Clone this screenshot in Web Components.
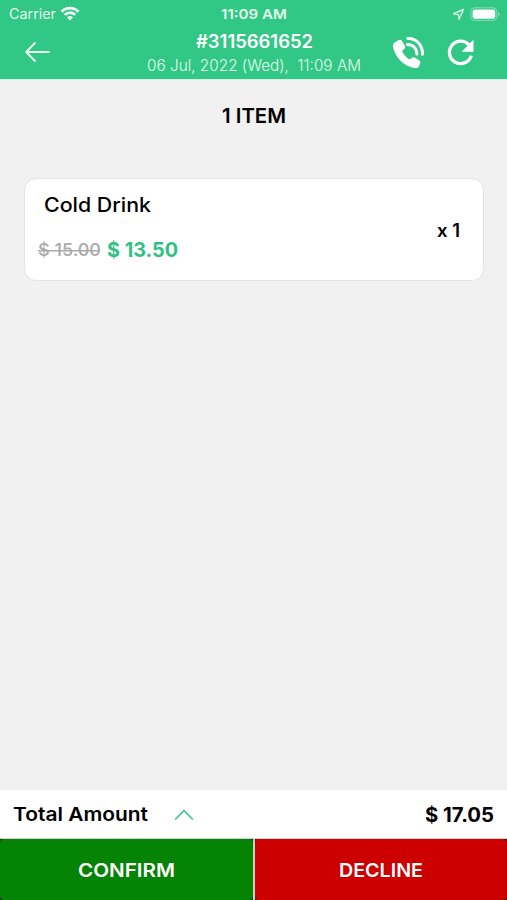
<!DOCTYPE html>
<html lang="en">
<head>
<meta charset="utf-8">
<meta name="viewport" content="width=device-width, initial-scale=1">
<title>Order #3115661652</title>
<style>
html, body { margin: 0; height: 100%; }
body { font-family: Inter, "Liberation Sans", sans-serif; color: #000; background: #f1f1f1; overflow: hidden; }
</style>
</head>
<body>
<order-screen></order-screen>
<script>
const define = (name, html, setup) => customElements.define(name, class extends HTMLElement {
  constructor() {
    super();
    this.attachShadow({ mode: 'open' }).innerHTML = html;
  }
  connectedCallback() { if (setup) setup(this); }
});

// One line of text widened or narrowed to occupy the width given by its attribute.
define('tracked-text', `<style>
:host { display: block; flex: none; white-space: nowrap; font-size: var(--size); line-height: var(--line, 24px); font-kerning: normal; }
span { display: inline-block; white-space: pre; transform-origin: 0 50%; vertical-align: top; }
</style><span></span>`, el => {
  const span = el.shadowRoot.querySelector('span');
  const width = Number(el.getAttribute('width'));
  span.textContent = el.getAttribute('text');
  el.style.width = width + 'px';
  const natural = span.getBoundingClientRect().width;
  span.style.transform = `scaleX(${(width + 1) / natural})`;
});

define('status-bar', `<style>
:host { display: grid; grid-template-columns: 1fr auto 1fr; align-items: center; height: 28px; padding: 0 6px 0 9px; color: #e4fbef; }
.left, .right { display: flex; align-items: center; }
.left { gap: 5px; }
.right { justify-content: flex-end; gap: 5px; }
.carrier { --size: 14px; }
.time { --size: 13.7px; font-weight: 600; margin-right: 3px; }
svg { display: block; }
</style>
<div class="left"><tracked-text class="carrier" width="46" text="Carrier"></tracked-text>
<svg width="20" height="16" viewBox="0 0 20 16" fill="none" stroke="#f4fff9" stroke-width="2.7"><path d="M1.500 5.700a12 12 0 0 1 17 0M4.700 8.900a7.500 7.500 0 0 1 10.600 0"/><path d="M10 14.600 7 11.500a4.300 4.300 0 0 1 6 0z" fill="#f4fff9" stroke="none"/></svg></div>
<tracked-text class="time" width="65" text="11:09 AM"></tracked-text>
<div class="right">
<svg width="13" height="13" viewBox="0 0 13 13" fill="none" stroke="#d6f8e6" stroke-width="1.4" stroke-linejoin="round"><path d="M11.500 1.500 1.500 5.700l5 .9.500 4.700z"/></svg>
<svg width="31" height="15" viewBox="0 0 31 15"><rect x=".8" y=".8" width="26" height="12.600" rx="3.800" fill="none" stroke="#85dfb2"/><rect x="2.600" y="2.500" width="22.600" height="9.200" rx="2.200" fill="#fff"/><path d="M28.200 4.700c2 .9 2 3.800 0 4.700z" fill="#85dfb2"/></svg>
</div>`);

define('order-header', `<style>
:host { display: block; height: 80px; background: #31c784; color: #fff; border-bottom: 1px solid #d5f0e2; box-sizing: border-box; flex: none; }
nav { display: grid; grid-template-columns: 1fr auto 1fr; height: 51px; }
.back { padding: 13px 0 0 24px; }
.mid { display: flex; flex-direction: column; align-items: center; padding-top: 2px; }
.id { --size: 18px; font-weight: 600; --line: 23px; }
.date { --size: 15.6px; font-weight: 300; color: #e4fbef; --line: 25px; }
.actions { display: flex; justify-content: flex-end; gap: 22px; padding: 8px 32px 0 0; }
svg { display: block; }
</style>
<status-bar></status-bar>
<nav>
<div class="back"><svg width="27" height="22" viewBox="0 0 27 22" fill="none" stroke="#e9fff4" stroke-width="1.9" stroke-linecap="round" stroke-linejoin="round"><path d="M25.200 11H2.200M11 2 2.200 11l8.800 9"/></svg></div>
<div class="mid"><tracked-text class="id" width="116" text="#3115661652"></tracked-text><tracked-text class="date" width="213" text="06 Jul, 2022 (Wed),  11:09 AM"></tracked-text></div>
<div class="actions">
<svg width="33" height="33" viewBox="-0.500 -0.500 32.500 33"><path fill="#fff" d="M3 5.200 6.100 3.600C7.400 3 8.600 3.500 9.200 4.500l2.900 4.700c.7 1.200.4 2.500-.6 3.300L9.200 14.600c1.300 3.200 4 6.200 7.500 8.500l2.100-1.700c1-.8 2.200-.9 3.300-.2l4.400 2.700c1.200.8 1.400 2 .9 3.200l-1.200 2.600c-.7 1.500-2.200 2.100-3.800 1.900C12.100 30.500 1.300 20.200.2 9.200 0 7.500 1.300 6 3 5.200z"/><path d="M15 2C23.500 1.500 30 8.500 29.800 17.800M14.600 7.900c5.600 0 9.400 3.900 9.500 9.700" fill="none" stroke="#fff" stroke-width="3" stroke-linecap="round"/></svg>
<svg width="28" height="32" viewBox="0 0 28 32"><path d="M22.200 9.200A11.200 11.200 0 1 0 24.300 19.800" fill="none" stroke="#fff" stroke-width="3.300"/><path d="M26.500 3.800v11.900H14.600z" fill="#fff"/></svg>
</div>
</nav>`);

define('order-item', `<style>
:host { display: flex; align-items: center; justify-content: space-between; box-sizing: border-box; height: 103px; margin: 0 23px 0 24px; padding: 2px 24px 0 13px; background: #fff; border: 1.5px solid #e3e3e3; border-radius: 12px; }
.info { align-self: stretch; padding-top: 12px; }
.name { --size: 20px; font-weight: 500; margin-left: 6px; }
.prices { display: flex; align-items: center; gap: 7px; margin-top: 21px; }
.old { --size: 17.5px; font-weight: 500; color: #aaa; background: linear-gradient(#aaa, #aaa) 0 12px / 100% 1.5px no-repeat; }
.new { --size: 20px; font-weight: 700; color: #31c184; }
.qty { --size: 18px; font-weight: 600; }
</style>
<div class="info"><tracked-text class="name" width="106" text="Cold Drink"></tracked-text>
<div class="prices"><tracked-text class="old" width="62" text="$ 15.00"></tracked-text><tracked-text class="new" width="70" text="$ 13.50"></tracked-text></div></div>
<tracked-text class="qty" width="22" text="x 1"></tracked-text>`);

define('total-bar', `<style>
:host { display: flex; align-items: center; height: 48px; padding: 1px 14px 0 13px; box-sizing: border-box; background: #fff; flex: none; }
.label { --size: 19px; font-weight: 600; }
.sum { --size: 19.5px; font-weight: 700; margin-left: auto; }
svg { display: block; margin-left: 27px; }
</style>
<tracked-text class="label" width="134" text="Total Amount"></tracked-text>
<svg width="20" height="14" viewBox="0 0 20 14" fill="none" stroke="#3fc48d" stroke-width="1.7" stroke-linecap="round" stroke-linejoin="round"><path d="M1.700 11 10 2.500l8.300 8.500"/></svg>
<tracked-text class="sum" width="68" text="$ 17.05"></tracked-text>`);

define('action-button', `<style>
:host { display: grid; background: #22252a; }
button { display: grid; place-items: center; font: inherit; font-weight: 600; border: 0; padding: 0; margin: 0; color: #fff; background: var(--fill); border-radius: 4px; }
</style><button><slot></slot></button>`);

define('order-screen', `<style>
:host { display: flex; flex-direction: column; height: 900px; background: #f1f1f1; }
main { flex: 1; }
.count { --size: 20.5px; font-weight: 600; margin: 24px auto 50px; }
.actions { display: grid; grid-template-columns: 253px 1fr; gap: 2px; height: 62px; background: #c9d2c9; border-top: 1px solid #cfd6cf; box-sizing: border-box; }
.confirm { --fill: #048304; }
.decline { --fill: #cd0000; }
.actions tracked-text { --size: 19.3px; margin-right: 2px; text-align: left; }
</style>
<order-header></order-header>
<main><tracked-text class="count" width="63" text="1 ITEM"></tracked-text><order-item></order-item></main>
<total-bar></total-bar>
<div class="actions">
<action-button class="confirm"><tracked-text width="96" text="CONFIRM"></tracked-text></action-button>
<action-button class="decline"><tracked-text width="83" text="DECLINE"></tracked-text></action-button>
</div>`);
</script>
</body>
</html>
